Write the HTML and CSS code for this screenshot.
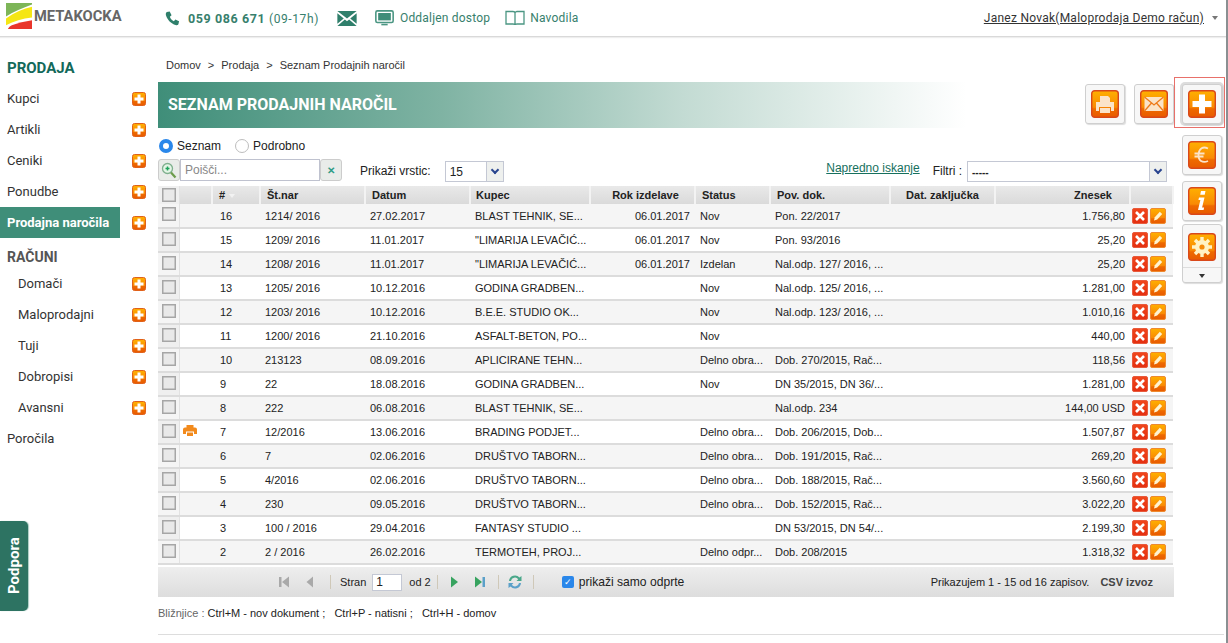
FILE: index.html
```html
<!DOCTYPE html>
<html lang="sl">
<head>
<meta charset="utf-8">
<title>Seznam prodajnih naročil</title>
<link rel="stylesheet" href="styles.css">
</head>
<body>
<svg class="defs" width="0" height="0" aria-hidden="true">
  <defs>
    <linearGradient id="og" x1="0" y1="0" x2="0" y2="1">
      <stop offset="0" stop-color="#ffb000"/><stop offset=".62" stop-color="#f98a04"/><stop offset=".68" stop-color="#ee6a00"/><stop offset="1" stop-color="#e85a00"/>
    </linearGradient>
    <linearGradient id="rg" x1="0" y1="0" x2="0" y2="1">
      <stop offset="0" stop-color="#f0471c"/><stop offset="1" stop-color="#e42f10"/>
    </linearGradient>
    <symbol id="box" viewBox="0 0 28 28"><rect x=".7" y=".7" width="26.6" height="26.6" rx="3" fill="url(#og)" stroke="#d9481a" stroke-width="1.4"/></symbol>
    <symbol id="plus" viewBox="0 0 14 14"><rect x=".5" y=".5" width="13" height="13" rx="2" fill="url(#og)" stroke="#e0611a"/><path d="M5.5 2.5h3v3h3v3h-3v3h-3v-3h-3v-3h3z" fill="#fff"/></symbol>
    <symbol id="del" viewBox="0 0 16 16"><rect x=".5" y=".5" width="15" height="15" rx="1.5" fill="url(#rg)" stroke="#e85a3c"/><path d="M4 4l8 8M12 4l-8 8" stroke="#fff" stroke-width="2.6"/></symbol>
    <symbol id="edit" viewBox="0 0 16 16"><rect x=".5" y=".5" width="15" height="15" rx="1.5" fill="url(#og)" stroke="#ee8a30"/><path d="M4 12.500l.8-3.300 5-5.400 2.400 2.200-5 5.400z" fill="#fff3d0"/></symbol>
    <symbol id="chk" viewBox="0 0 14 14"><rect x=".75" y=".75" width="12.5" height="12.5" fill="#e9e9e9" stroke="#a6a6a6" stroke-width="1.5"/></symbol>
  </defs>
</svg>

<header class="top">
  <div class="brand">
    <svg class="logo" viewBox="0 0 28 27"><path d="M0 0h27v1.500C17 5 8 9 0 14z" fill="#7db558"/><path d="M0 16C9 10 18 6 27 4v11C17 16 8 19 0 23z" fill="#f5e614"/><path d="M2 27c1-2 2-3 4-4 6-2 14-4 21-5v9z" fill="#e9352b"/></svg>
    <span class="brand-name">METAKOCKA</span>
  </div>
  <nav class="quick">
    <svg class="ic-phone" viewBox="0 0 16 16"><path d="M2 1l3-.5 2 4-1.800 1.500c.6 2 2.400 4 4.300 4.800L11 9l4 2-.7 3.200c-.3.800-1.500 1.300-3 .8C6.500 13.500 2.500 9.500 1 4.500.7 3 1 1.600 2 1z" fill="#2f7f6b"/></svg>
    <span class="tel"><b>059 086 671</b> (09-17h)</span>
    <svg class="ic-mail" viewBox="0 0 18 14"><path d="M0 0h18L9 7z M0 2l6 5-6 5z M18 2l-6 5 6 5z M0 14l7-6 2 1.500L11 8l7 6z" fill="#2f7f6b"/></svg>
    <svg class="ic-screen" viewBox="0 0 18 16"><rect x=".8" y=".8" width="16.400" height="11" rx="1.500" fill="#fff" stroke="#4b9683" stroke-width="1.500"/><rect x="3" y="2.800" width="12" height="7" fill="#3f8d79"/><path d="M6 13h6v1.500H6z" fill="#4b9683"/></svg>
    <span class="qlink">Oddaljen dostop</span>
    <svg class="ic-book" viewBox="0 0 20 16"><path d="M1 1.500h7c1 0 2 .6 2 1.500 0-.9 1-1.500 2-1.500h7v12.500h-7c-1 0-2 .3-2 1 0-.7-1-1-2-1H1zM10 3v12" fill="#fff" stroke="#4b9683" stroke-width="1.300"/></svg>
    <span class="qlink">Navodila</span>
  </nav>
  <div class="user"><a class="user-name">Janez Novak(Maloprodaja Demo račun)</a><i class="caret"></i></div>
</header>

<div class="page">
  <aside class="side">
    <h2 class="side-head">PRODAJA</h2>
    <div class="item"><span>Kupci</span><svg class="pl"><use href="#plus"/></svg></div>
    <div class="item"><span>Artikli</span><svg class="pl"><use href="#plus"/></svg></div>
    <div class="item"><span>Ceniki</span><svg class="pl"><use href="#plus"/></svg></div>
    <div class="item"><span>Ponudbe</span><svg class="pl"><use href="#plus"/></svg></div>
    <div class="item"><span class="active">Prodajna naročila</span><svg class="pl"><use href="#plus"/></svg></div>
    <h3 class="side-sub">RAČUNI</h3>
    <div class="item sub"><span>Domači</span><svg class="pl"><use href="#plus"/></svg></div>
    <div class="item sub"><span>Maloprodajni</span><svg class="pl"><use href="#plus"/></svg></div>
    <div class="item sub"><span>Tuji</span><svg class="pl"><use href="#plus"/></svg></div>
    <div class="item sub"><span>Dobropisi</span><svg class="pl"><use href="#plus"/></svg></div>
    <div class="item sub"><span>Avansni</span><svg class="pl"><use href="#plus"/></svg></div>
    <div class="item"><span>Poročila</span></div>
  </aside>

  <main class="main">
    <div class="crumbs">Domov<b>&gt;</b>Prodaja<b>&gt;</b>Seznam Prodajnih naročil</div>
    <div class="title-row">
      <h1 class="title">SEZNAM PRODAJNIH NAROČIL</h1>
      <div class="tbtn"><svg class="bigic" viewBox="0 0 28 28"><use href="#box"/><path d="M9 6h8l2 2v4H9z M5 12h18v9h-3v-4H8v4H5z M9 18h10v5H9z" fill="#fbe3c8"/></svg></div>
      <div class="tbtn"><svg class="bigic" viewBox="0 0 28 28"><use href="#box"/><path d="M4.500 7h19v14h-19z" fill="#fbe3c8"/><path d="M4.500 7L14 15l9.500-8M4.500 21l7-8M23.500 21l-7-8" fill="none" stroke="#ee7a1a" stroke-width="1.300"/></svg></div>
    </div>
    <div class="modes">
      <span class="radio on"></span><span class="mode-l">Seznam</span>
      <span class="radio"></span><span class="mode-l">Podrobno</span>
    </div>
    <div class="filters">
      <div class="search">
        <span class="s-ic"><svg width="16" height="17" viewBox="0 0 16 17"><circle cx="6.500" cy="6.500" r="5" fill="#e4f5e6" stroke="#7fb08e" stroke-width="1.300"/><path d="M4.500 6.500h4M6.500 4.500v4" stroke="#1ea35b" stroke-width="1.500"/><path d="M10 10.500l4.500 5" stroke="#6c9c4c" stroke-width="2.200"/></svg></span>
        <span class="s-in">Poišči...</span>
        <span class="s-x">✕</span>
      </div>
      <span class="lbl-rows">Prikaži vrstic:</span>
      <div class="sel sel-rows"><span class="sel-v">15</span><span class="sel-b"><i></i></span></div>
      <a class="adv">Napredno iskanje</a>
      <span class="lbl-fil">Filtri :</span>
      <div class="sel sel-fil"><span class="sel-v">-----</span><span class="sel-b"><i></i></span></div>
    </div>
    <table class="grid">
      <colgroup>
        <col class="c1"><col class="c2"><col class="c3"><col class="c4"><col class="c5"><col class="c6"><col class="c7"><col class="c8"><col class="c9"><col class="c10"><col class="c11"><col class="c12">
      </colgroup>
      <thead>
        <tr><th class="ck"><svg class="cb"><use href="#chk"/></svg></th><th></th><th class="hn">#<i class="sort"></i></th><th>Št.nar</th><th>Datum</th><th class="hk">Kupec</th><th class="ctr">Rok izdelave</th><th>Status</th><th>Pov. dok.</th><th class="ctr">Dat. zaključka</th><th class="hz">Znesek</th><th></th></tr>
      </thead>
      <tbody>
        <tr><td class="ck"><svg class="cb"><use href="#chk"/></svg></td><td></td><td class="n">16</td><td>1214/ 2016</td><td>27.02.2017</td><td>BLAST TEHNIK, SE...</td><td class="r">06.01.2017</td><td>Nov</td><td>Pon. 22/2017</td><td></td><td class="r">1.756,80</td><td class="act"><svg class="ai"><use href="#del"/></svg><svg class="ai"><use href="#edit"/></svg></td></tr>
        <tr><td class="ck"><svg class="cb"><use href="#chk"/></svg></td><td></td><td class="n">15</td><td>1209/ 2016</td><td>11.01.2017</td><td>"LIMARIJA LEVAČIĆ...</td><td class="r">06.01.2017</td><td>Nov</td><td>Pon. 93/2016</td><td></td><td class="r">25,20</td><td class="act"><svg class="ai"><use href="#del"/></svg><svg class="ai"><use href="#edit"/></svg></td></tr>
        <tr><td class="ck"><svg class="cb"><use href="#chk"/></svg></td><td></td><td class="n">14</td><td>1208/ 2016</td><td>11.01.2017</td><td>"LIMARIJA LEVAČIĆ...</td><td class="r">06.01.2017</td><td>Izdelan</td><td>Nal.odp. 127/ 2016, ...</td><td></td><td class="r">25,20</td><td class="act"><svg class="ai"><use href="#del"/></svg><svg class="ai"><use href="#edit"/></svg></td></tr>
        <tr><td class="ck"><svg class="cb"><use href="#chk"/></svg></td><td></td><td class="n">13</td><td>1205/ 2016</td><td>10.12.2016</td><td>GODINA GRADBEN...</td><td></td><td>Nov</td><td>Nal.odp. 125/ 2016, ...</td><td></td><td class="r">1.281,00</td><td class="act"><svg class="ai"><use href="#del"/></svg><svg class="ai"><use href="#edit"/></svg></td></tr>
        <tr><td class="ck"><svg class="cb"><use href="#chk"/></svg></td><td></td><td class="n">12</td><td>1203/ 2016</td><td>10.12.2016</td><td>B.E.E. STUDIO OK...</td><td></td><td>Nov</td><td>Nal.odp. 123/ 2016, ...</td><td></td><td class="r">1.010,16</td><td class="act"><svg class="ai"><use href="#del"/></svg><svg class="ai"><use href="#edit"/></svg></td></tr>
        <tr><td class="ck"><svg class="cb"><use href="#chk"/></svg></td><td></td><td class="n">11</td><td>1200/ 2016</td><td>21.10.2016</td><td>ASFALT-BETON, PO...</td><td></td><td>Nov</td><td></td><td></td><td class="r">440,00</td><td class="act"><svg class="ai"><use href="#del"/></svg><svg class="ai"><use href="#edit"/></svg></td></tr>
        <tr><td class="ck"><svg class="cb"><use href="#chk"/></svg></td><td></td><td class="n">10</td><td>213123</td><td>08.09.2016</td><td>APLICIRANE TEHN...</td><td></td><td>Delno obra...</td><td>Dob. 270/2015, Rač...</td><td></td><td class="r">118,56</td><td class="act"><svg class="ai"><use href="#del"/></svg><svg class="ai"><use href="#edit"/></svg></td></tr>
        <tr><td class="ck"><svg class="cb"><use href="#chk"/></svg></td><td></td><td class="n">9</td><td>22</td><td>18.08.2016</td><td>GODINA GRADBEN...</td><td></td><td>Nov</td><td>DN 35/2015, DN 36/...</td><td></td><td class="r">1.281,00</td><td class="act"><svg class="ai"><use href="#del"/></svg><svg class="ai"><use href="#edit"/></svg></td></tr>
        <tr><td class="ck"><svg class="cb"><use href="#chk"/></svg></td><td></td><td class="n">8</td><td>222</td><td>06.08.2016</td><td>BLAST TEHNIK, SE...</td><td></td><td></td><td>Nal.odp. 234</td><td></td><td class="r">144,00 USD</td><td class="act"><svg class="ai"><use href="#del"/></svg><svg class="ai"><use href="#edit"/></svg></td></tr>
        <tr><td class="ck"><svg class="cb"><use href="#chk"/></svg></td><td class="pr"><svg class="prn" viewBox="0 0 14 11"><path d="M3.500 0h7v3h-7z M2 2.500h10q2 0 2 2V9h-3V6.500H3V9H0V4.500q0-2 2-2z M4 7.500h6V11H4z" fill="#f28a1c"/></svg></td><td class="n">7</td><td>12/2016</td><td>13.06.2016</td><td>BRADING PODJET...</td><td></td><td>Delno obra...</td><td>Dob. 206/2015, Dob...</td><td></td><td class="r">1.507,87</td><td class="act"><svg class="ai"><use href="#del"/></svg><svg class="ai"><use href="#edit"/></svg></td></tr>
        <tr><td class="ck"><svg class="cb"><use href="#chk"/></svg></td><td></td><td class="n">6</td><td>7</td><td>02.06.2016</td><td>DRUŠTVO TABORN...</td><td></td><td>Delno obra...</td><td>Dob. 191/2015, Rač...</td><td></td><td class="r">269,20</td><td class="act"><svg class="ai"><use href="#del"/></svg><svg class="ai"><use href="#edit"/></svg></td></tr>
        <tr><td class="ck"><svg class="cb"><use href="#chk"/></svg></td><td></td><td class="n">5</td><td>4/2016</td><td>02.06.2016</td><td>DRUŠTVO TABORN...</td><td></td><td>Delno obra...</td><td>Dob. 188/2015, Rač...</td><td></td><td class="r">3.560,60</td><td class="act"><svg class="ai"><use href="#del"/></svg><svg class="ai"><use href="#edit"/></svg></td></tr>
        <tr><td class="ck"><svg class="cb"><use href="#chk"/></svg></td><td></td><td class="n">4</td><td>230</td><td>09.05.2016</td><td>DRUŠTVO TABORN...</td><td></td><td>Delno obra...</td><td>Dob. 152/2015, Rač...</td><td></td><td class="r">3.022,20</td><td class="act"><svg class="ai"><use href="#del"/></svg><svg class="ai"><use href="#edit"/></svg></td></tr>
        <tr><td class="ck"><svg class="cb"><use href="#chk"/></svg></td><td></td><td class="n">3</td><td>100 / 2016</td><td>29.04.2016</td><td>FANTASY STUDIO ...</td><td></td><td></td><td>DN 53/2015, DN 54/...</td><td></td><td class="r">2.199,30</td><td class="act"><svg class="ai"><use href="#del"/></svg><svg class="ai"><use href="#edit"/></svg></td></tr>
        <tr><td class="ck"><svg class="cb"><use href="#chk"/></svg></td><td></td><td class="n">2</td><td>2 / 2016</td><td>26.02.2016</td><td>TERMOTEH, PROJ...</td><td></td><td>Delno odpr...</td><td>Dob. 208/2015</td><td></td><td class="r">1.318,32</td><td class="act"><svg class="ai"><use href="#del"/></svg><svg class="ai"><use href="#edit"/></svg></td></tr>
      </tbody>
    </table>
    <div class="pager">
      <svg class="pg" viewBox="0 0 14 14"><path d="M2 2h2.500v10H2z M12 1.500v11L5 7z" fill="#a9a9a9"/></svg>
      <svg class="pg pg2" viewBox="0 0 14 14"><path d="M10 1.500v11L3.500 7z" fill="#a9a9a9"/></svg>
      <i class="sep sep1"></i>
      <span class="p-l">Stran</span><span class="p-in">1</span><span class="p-of">od 2</span>
      <i class="sep sep2"></i>
      <svg class="pg pg3" viewBox="0 0 14 14"><path d="M4 1.500v11L11 7z" fill="#37a35f"/></svg>
      <svg class="pg pg4" viewBox="0 0 14 14"><path d="M2 1.500v11L9 7z" fill="#37a35f"/><path d="M9.500 2h2.500v10H9.500z" fill="#5ba0c9"/></svg>
      <i class="sep sep3"></i>
      <svg class="pg pg5" viewBox="0 0 16 16"><path d="M2 7a6 6 0 0 1 10.500-3.500L14.500 2v5h-5l1.700-1.700A4 4 0 0 0 4 7z" fill="#4aa88a"/><path d="M14 9a6 6 0 0 1-10.500 3.500L1.500 14V9h5l-1.700 1.700A4 4 0 0 0 12 9z" fill="#5ba0c9"/></svg>
      <i class="sep sep4"></i>
      <span class="p-chk">✓</span><span class="p-open">prikaži samo odprte</span>
      <span class="p-info">Prikazujem 1 - 15 od 16 zapisov.</span>
      <b class="p-csv">CSV izvoz</b>
    </div>
    <p class="keys"><span class="keys-l">Bližnjice : </span>Ctrl+M - nov dokument ;&nbsp;&nbsp; Ctrl+P - natisni ;&nbsp;&nbsp; Ctrl+H - domov</p>
  </main>

  <aside class="tools">
    <div class="tbtn hot"><svg class="bigic" viewBox="0 0 28 28"><use href="#box"/><path d="M11 4.500h6V11h6.500v6H17v6.500h-6V17H4.500v-6H11z" fill="#fff"/></svg></div>
    <div class="tbtn gap"><svg class="bigic" viewBox="0 0 28 28"><use href="#box"/><path d="M20 7.500c-5-2.500-9 0-9.500 6-.4 6 4 9 9.500 6.500M6.500 12.500h10M6.500 15.500h9" fill="none" stroke="#fbe3c8" stroke-width="1.800"/></svg></div>
    <div class="tbtn gap2"><svg class="bigic" viewBox="0 0 28 28"><use href="#box"/><path d="M13 4h4.500l-.8 3.800h-4.500zM11 10.500h5.500l-2.400 10h2l-.5 2.500H10l2.400-10h-2z" fill="#fff"/></svg></div>
    <div class="tbtn gap3 long"><svg class="bigic" viewBox="0 0 28 28"><use href="#box"/><circle cx="14" cy="14" r="7" fill="#fff2c4"/><path d="M14 4v20M4 14h20M7 7l14 14M21 7L7 21" stroke="#fff2c4" stroke-width="3.400"/><circle cx="14" cy="14" r="2.600" fill="#f58a0a"/></svg><span class="more"><i></i></span></div>
  </aside>
</div>

<hr class="rule">
<div class="support">Podpora</div>
</body>
</html>
```

FILE: styles.css
```css
* { box-sizing: border-box; }
html, body { margin: 0; padding: 0; }
body {
  width: 1228px;
  height: 643px;
  overflow: hidden;
  position: relative;
  background: #fff;
  color: #222;
  font-family: "Liberation Sans", Arial, sans-serif;
  font-size: 12px;
  border-right: 2px solid #8a8f92;
}
.defs { position: absolute; }

/* top bar */
.top {
  height: 37px;
  display: flex;
  align-items: center;
  border-bottom: 1px solid #d9d9d9;
  box-shadow: 0 1px 1px #eee;
  font-family: Roboto, sans-serif;
}
.brand { display: flex; align-items: center; align-self: flex-start; margin: 3px 0 0 6px; width: 159px; height: 26px; }
.logo { width: 27px; height: 26px; flex: none; }
.brand-name { margin-left: 1px; font: 700 14.700px Roboto, sans-serif; color: #666; }
.quick { display: flex; align-items: center; color: #37806d; font-size: 12px; letter-spacing: .2px; }
.ic-phone { width: 15px; height: 15px; }
.tel { margin-left: 8px; font-size: 12px; letter-spacing: .6px; }
.tel b { font-size: 12.500px; }
.ic-mail { width: 20px; height: 15px; margin-left: 18px; }
.ic-screen { width: 19px; height: 17px; margin-left: 18px; }
.qlink { margin-left: 6px; }
.ic-book { width: 20px; height: 16px; margin-left: 15px; margin-right: -1px; }
.user { margin-left: auto; margin-right: 8px; display: flex; align-items: center; letter-spacing: .25px; font-size: 12px; color: #333; }
.user-name { text-decoration: underline; }
.caret { margin-left: 8px; border: 3.500px solid transparent; border-top: 4px solid #777; border-bottom: 0; }

/* layout */
.page { display: flex; align-items: flex-start; }
.side { width: 158px; flex: none; padding-top: 22px; font-family: Roboto, sans-serif; }
.side-head { margin: 0 0 6px 7px; font-size: 15px; line-height: 18px; font-weight: 700; color: #13695a; }
.side-sub { margin: 10px 0 2px 7px; font-size: 14px; line-height: 18px; font-weight: 700; color: #555; }
.item { height: 31px; display: flex; align-items: center; justify-content: space-between; font-size: 13px; color: #333; padding-right: 12px; }
.item span { padding-left: 7px; }
.item.sub span { padding-left: 18px; }
.item .active { display: block; width: 120px; height: 31px; line-height: 31px; background: #3f8e79; color: #fff; font-weight: 700; }
.pl { width: 14px; height: 14px; }

/* main */
.main { width: 1016px; flex: none; }
.crumbs { height: 45px; padding: 22px 0 0 8px; font-size: 11px; line-height: 13px; color: #333; }
.crumbs b { margin: 0 7px; font-weight: 400; }
.title-row { display: flex; height: 46px; align-items: flex-start; }
.title {
  flex: none;
  margin: 0 119px 0 0;
  width: 808px;
  height: 46px;
  padding-left: 10px;
  color: #fff;
  font: 700 16px/46px Roboto, sans-serif;
  background: linear-gradient(90deg, #3f8e79 0%, #7fb3a3 35%, #c3dbd3 65%, #fff 100%);
}
.tbtn { flex: none; width: 40px; height: 40px; margin-top: 2px; margin-right: 9px; border: 1px solid #cfcfcf; border-radius: 3px; background: #f7f7f7; box-shadow: 1px 1px 1px #ddd; display: flex; flex-direction: column; align-items: center; }
.title-row .tbtn:last-child { margin-right: 0; }
.bigic { width: 28px; height: 28px; margin-top: 5px; flex: none; }

.modes { display: flex; align-items: center; height: 18px; margin-top: 9px; font-size: 12px; }
.radio { width: 14px; height: 14px; margin-left: 1px; border-radius: 50%; border: 1px solid #bdbdbd; background: #fff; margin-right: 4px; }
.radio.on { border: 4px solid #2a87ea; }
.mode-l { margin-right: 13px; }
.filters { display: flex; align-items: center; height: 31px; }
.search { display: flex; width: 184px; height: 22px; margin-top: -1px; }
.s-ic, .s-x { width: 22px; flex: none; background: #e9ece9; border: 1px solid #ccc; border-radius: 3px; display: flex; align-items: center; justify-content: center; }
.s-x { color: #2e9c86; font-size: 10px; font-weight: 700; }
.s-in { flex: 1; border: 1px solid #bfc2cf; background: #fff; padding-left: 4px; line-height: 20px; color: #888; font-size: 12px; }
.lbl-rows { margin-left: 18px; font-size: 12px; }
.sel { display: flex; border: 1px solid #c4c8d4; background: #fff; height: 21px; margin-top: 2px; }
.sel-rows { width: 59px; margin-left: 14px; }
.sel-fil { width: 200px; margin-left: 5px; margin-right: 7px; }
.sel-v { flex: 1; padding-left: 4px; line-height: 21px; font-size: 12px; }
.sel-fil .sel-v { font-size: 10px; font-weight: 700; }
.sel-b { width: 17px; background: #eef0ee; border-left: 1px solid #c4c8d4; display: flex; align-items: center; justify-content: center; }
.sel-b i { width: 6px; height: 6px; margin-top: -3px; border: solid #29458f; border-width: 0 2px 2px 0; transform: rotate(45deg); }
.adv { margin-left: auto; color: #16705d; text-decoration: underline; font-size: 12px; margin-top: -5px; }
.lbl-fil { margin-left: 13px; font-size: 12px; }

/* table */
.grid { width: 1015px; border-collapse: collapse; table-layout: fixed; font-size: 11px; }
.c1 { width: 21px; } .c2 { width: 33px; } .c3 { width: 48px; } .c4 { width: 105px; } .c5 { width: 105px; }
.c6 { width: 120px; } .c7 { width: 105px; } .c8 { width: 75px; } .c9 { width: 120px; } .c10 { width: 105px; } .c11 { width: 135px; } .c12 { width: 43px; }
.grid th { height: 18px; padding: 0 0 0 6px; text-align: left; background: linear-gradient(#e9e9e9, #dadada); border-right: 2px solid #f3f3f3; font-size: 11px; font-weight: 700; color: #222; }
.grid th.ctr { text-align: center; padding: 0; }
.grid th:nth-child(7) { padding-left: 6px; }
.grid th.hk { padding-left: 5px; }
.grid th.hz { text-align: right; padding-right: 17px; }
.sort { display: inline-block; margin-left: 4px; border: 3.500px solid transparent; border-top: 4px solid #f2f2f2; border-bottom: 0; vertical-align: 1px; }
.grid td { height: 24px; padding: 0 0 0 5px; white-space: nowrap; overflow: hidden; border-bottom: 2px solid #dcdcdc; color: #222; }
.grid tbody tr:nth-child(odd) td { background: #f5f5f5; }
.grid td.ck, .grid th.ck { padding: 0 0 0 4px; background: #f0f0f0; border-right: 1px solid #e2e2e2; }
.grid tbody td.ck { background: #efefef; }
.grid td.n { padding-left: 8px; }
.grid td.r { text-align: right; padding-right: 5px; }
.grid td.pr { vertical-align: top; padding: 4px 0 0 3px; }
.cb { display: block; width: 14px; height: 14px; margin-bottom: 3px; }
.grid th .cb { margin-bottom: 0; }
.prn { display: block; width: 14px; height: 11px; }
.grid td.act { padding: 0; font-size: 0; }
.ai { width: 16px; height: 16px; margin-left: 2px; vertical-align: middle; }
.ai + .ai { margin-left: 2px; }

/* pager */
.pager { display: flex; align-items: center; height: 30px; margin-top: 2px; background: linear-gradient(#eeeeee, #dddddd); font-size: 11px; }
.pg { width: 14px; height: 14px; margin-left: 119px; flex: none; }
.pg2 { margin-left: 12px; }
.sep { width: 1px; height: 14px; background: #cfc8b8; flex: none; }
.sep1 { margin-left: 13px; }
.p-l { margin-left: 9px; }
.p-in { width: 30px; height: 17px; margin-left: 6px; padding-left: 3px; line-height: 15px; background: #fff; border: 1px solid #c4c8d4; font-size: 12px; }
.p-of { margin-left: 7px; }
.sep2 { margin-left: 6px; }
.pg3 { margin-left: 9px; }
.pg4 { margin-left: 12px; }
.sep3 { margin-left: 11px; }
.pg5 { width: 16px; height: 16px; margin-left: 8px; }
.sep4 { margin-left: 10px; }
.p-chk { width: 12px; height: 12px; margin-left: 28px; border-radius: 2px; background: #2a87ea; color: #fff; font-size: 9px; line-height: 12px; text-align: center; }
.p-open { margin-left: 5px; font-size: 12.100px; }
.p-info { margin-left: auto; font-size: 11px; }
.p-csv { margin: 0 21px 0 11px; font-size: 11px; color: #444; }
.keys { margin: 10px 0 0; font-size: 11px; color: #222; line-height: 13px; }
.keys-l { color: #666; }

/* tools */
.tools { width: 40px; flex: none; margin-left: 8px; padding-top: 45px; }
.tools .tbtn { margin-right: 0; }
.tools .hot { position: relative; box-shadow: 1px 1px 1px #ccc, 0 0 0 2px #ddd; }
.tools .hot::after { content: ""; position: absolute; left: -9px; top: -8px; width: 49px; height: 49px; border: 1px solid #e8706a; }
.tools .gap { margin-top: 11px; }
.tools .gap2 { margin-top: 6px; }
.tools .gap3 { margin-top: 3px; }
.tools .long { height: 59px; }
.tools .long .bigic { margin-top: 8px; }
.more { width: 100%; margin-top: 6px; padding-top: 6px; border-top: 1px solid #ddd; display: flex; justify-content: center; }
.more i { border: 3px solid transparent; border-top: 4px solid #333; border-bottom: 0; }

.rule { position: absolute; left: 158px; right: 2px; top: 634px; margin: 0; border: 0; border-top: 1px solid #ddd; }
.support {
  position: absolute;
  left: 0;
  top: 521px;
  width: 28px;
  height: 90px;
  rotate: 180deg;
  border-radius: 5px 0 0 5px;
  background: #2d7362;
  box-shadow: -1px 0 1px #a9cbc2;
  color: #fff;
  font: 700 15px Roboto, sans-serif;
  writing-mode: vertical-rl;
  display: flex;
  align-items: center;
  justify-content: center;
}
```
